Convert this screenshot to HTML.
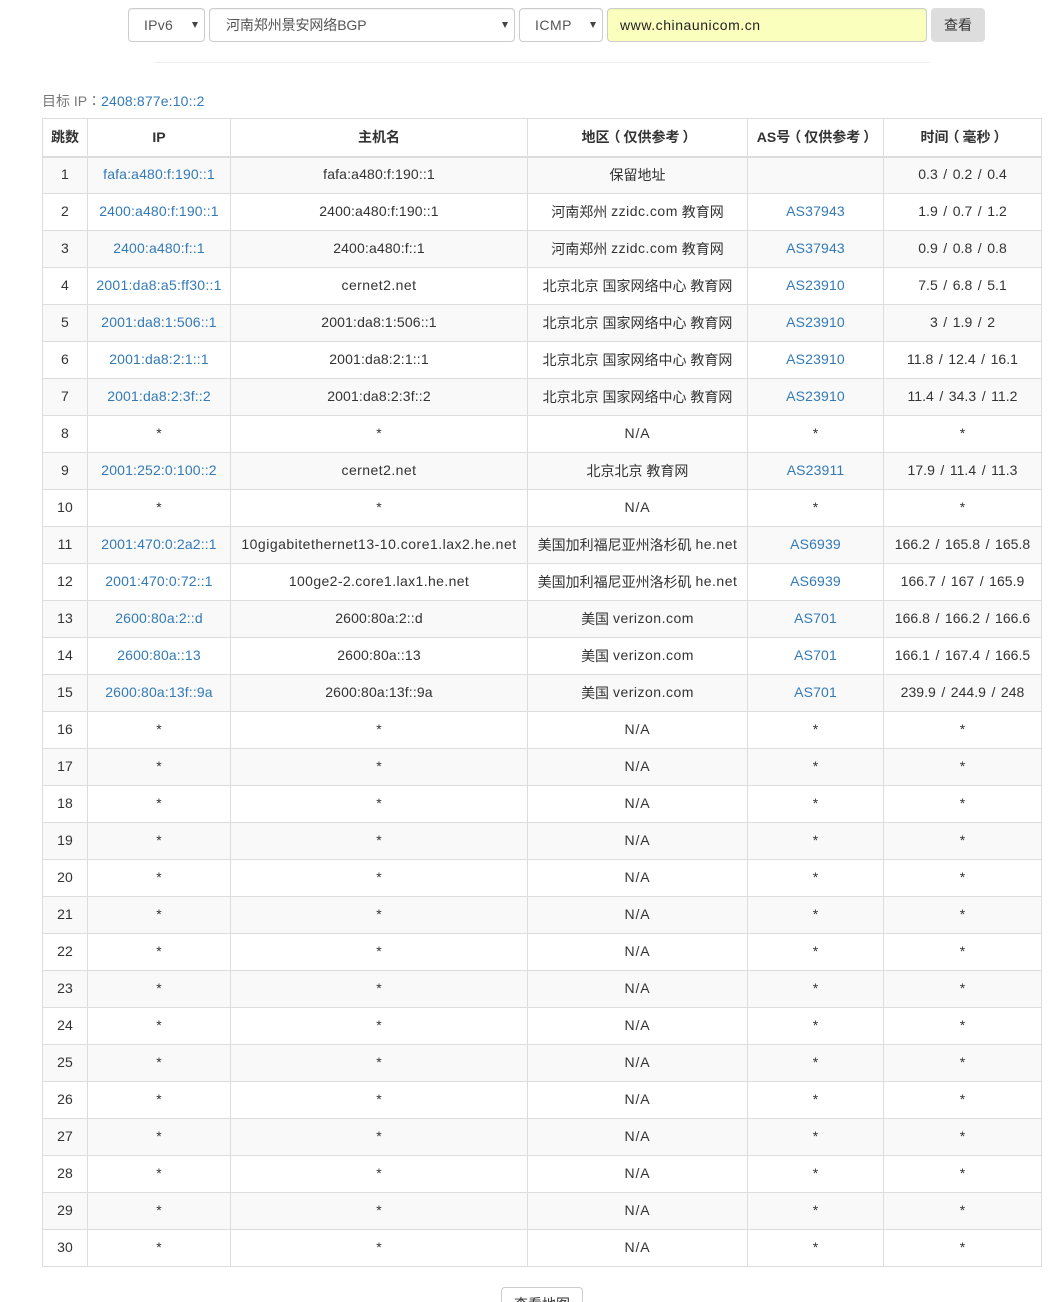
<!DOCTYPE html>
<html lang="zh-CN">
<head>
<meta charset="utf-8">
<title>路由追踪</title>
<style>
html,body{margin:0;padding:0;background:#fff;width:1061px;height:1302px;overflow:hidden;}
#w{position:relative;width:1061px;height:1302px;overflow:hidden;font-family:"Liberation Sans","Noto Sans CJK SC",sans-serif;font-size:14px;color:#333;}
a{color:#337ab7;text-decoration:none;}
.ctl{position:absolute;top:8px;height:34px;box-sizing:border-box;border:1px solid #ccc;border-radius:4px;background:#fff;color:#555;line-height:32px;box-shadow:inset 0 1px 1px rgba(0,0,0,.05);white-space:nowrap;}
.ctl i{position:absolute;top:13px;width:0;height:0;border-left:3px solid transparent;border-right:3px solid transparent;border-top:6px solid #444;}
.hr{position:absolute;left:154px;top:62px;width:776px;height:1px;background:#eee;}
.lbl{position:absolute;left:42px;top:91px;line-height:20px;color:#777;white-space:nowrap;}
.lbl a{letter-spacing:.15px;}
.tc{font-family:"Noto Sans CJK TC",sans-serif;}
.p{position:relative;left:-3px;}
.q{position:relative;left:3px;}
table{position:absolute;left:42px;top:118px;width:1000px;table-layout:fixed;border-collapse:collapse;border:1px solid #ddd;}
th,td{border:1px solid #ddd;text-align:center;padding:0;white-space:nowrap;box-sizing:border-box;vertical-align:middle;}
th{height:38px;border-bottom:2px solid #ddd;font-weight:bold;}
td{height:37px;padding-bottom:2px;letter-spacing:.15px;}
td.r{padding-bottom:0;letter-spacing:0;}
td.t{word-spacing:1.6px;letter-spacing:.03px;}
td.n{letter-spacing:.9px;}
td.h{letter-spacing:.45px;}
span.l{letter-spacing:.5px;position:relative;top:-1px;}
tbody tr:nth-child(odd){background:#f9f9f9;}
.more{position:absolute;left:501px;top:1287px;width:82px;height:34px;box-sizing:border-box;border:1px solid #ccc;border-radius:4px;background:#fff;text-align:center;line-height:32px;color:#333;}
</style>
</head>
<body>
<div id="w">
<div class="ctl" style="left:128px;width:77px;padding-left:15px;letter-spacing:.25px;">IPv6<i style="left:63px;"></i></div>
<div class="ctl" style="left:209px;width:306px;padding-left:16px;letter-spacing:-.1px;">河南郑州景安网络BGP<i style="left:292px;"></i></div>
<div class="ctl" style="left:519px;width:84px;padding-left:15px;letter-spacing:.5px;">ICMP<i style="left:70px;"></i></div>
<div class="ctl" style="left:607px;width:320px;padding-left:12px;background:#faffbd;color:#222;letter-spacing:.55px;">www.chinaunicom.cn</div>
<div style="position:absolute;left:931px;top:8px;width:54px;height:34px;background:#ddd;border-radius:4px;text-align:center;line-height:34px;color:#333;">查看</div>
<div class="hr"></div>
<div class="lbl">目标 IP<span class="tc" lang="zh-TW">：</span><a href="#">2408:877e:10::2</a></div>
<table>
<colgroup><col style="width:45px"><col style="width:143px"><col style="width:297px"><col style="width:220px"><col style="width:136px"><col style="width:158px"></colgroup>
<thead><tr><th>跳数</th><th>IP</th><th>主机名</th><th>地区<span class="p">（</span>仅供参考<span class="q">）</span></th><th>AS号<span class="p">（</span>仅供参考<span class="q">）</span></th><th>时间<span class="p">（</span>毫秒<span class="q">）</span></th></tr></thead>
<tbody>
<tr><td>1</td><td><a href="#">fafa:a480:f:190::1</a></td><td>fafa:a480:f:190::1</td><td class="r">保留地址</td><td></td><td class="t">0.3 / 0.2 / 0.4</td></tr>
<tr><td>2</td><td><a href="#">2400:a480:f:190::1</a></td><td>2400:a480:f:190::1</td><td class="r">河南郑州 <span class="l">zzidc.com</span> 教育网</td><td><a href="#">AS37943</a></td><td class="t">1.9 / 0.7 / 1.2</td></tr>
<tr><td>3</td><td><a href="#">2400:a480:f::1</a></td><td>2400:a480:f::1</td><td class="r">河南郑州 <span class="l">zzidc.com</span> 教育网</td><td><a href="#">AS37943</a></td><td class="t">0.9 / 0.8 / 0.8</td></tr>
<tr><td>4</td><td><a href="#" style="letter-spacing:.26px">2001:da8:a5:ff30::1</a></td><td class="h">cernet2.net</td><td class="r">北京北京 国家网络中心 教育网</td><td><a href="#">AS23910</a></td><td class="t">7.5 / 6.8 / 5.1</td></tr>
<tr><td>5</td><td><a href="#">2001:da8:1:506::1</a></td><td>2001:da8:1:506::1</td><td class="r">北京北京 国家网络中心 教育网</td><td><a href="#">AS23910</a></td><td class="t">3 / 1.9 / 2</td></tr>
<tr><td>6</td><td><a href="#">2001:da8:2:1::1</a></td><td>2001:da8:2:1::1</td><td class="r">北京北京 国家网络中心 教育网</td><td><a href="#">AS23910</a></td><td class="t">11.8 / 12.4 / 16.1</td></tr>
<tr><td>7</td><td><a href="#">2001:da8:2:3f::2</a></td><td>2001:da8:2:3f::2</td><td class="r">北京北京 国家网络中心 教育网</td><td><a href="#">AS23910</a></td><td class="t">11.4 / 34.3 / 11.2</td></tr>
<tr><td>8</td><td>*</td><td>*</td><td class="n">N/A</td><td>*</td><td>*</td></tr>
<tr><td>9</td><td><a href="#">2001:252:0:100::2</a></td><td class="h">cernet2.net</td><td class="r">北京北京 教育网</td><td><a href="#">AS23911</a></td><td class="t">17.9 / 11.4 / 11.3</td></tr>
<tr><td>10</td><td>*</td><td>*</td><td class="n">N/A</td><td>*</td><td>*</td></tr>
<tr><td>11</td><td><a href="#">2001:470:0:2a2::1</a></td><td class="h" style="letter-spacing:.5px">10gigabitethernet13-10.core1.lax2.he.net</td><td class="r">美国加利福尼亚州洛杉矶 <span class="l">he.net</span></td><td><a href="#">AS6939</a></td><td class="t">166.2 / 165.8 / 165.8</td></tr>
<tr><td>12</td><td><a href="#">2001:470:0:72::1</a></td><td class="h" style="letter-spacing:.38px">100ge2-2.core1.lax1.he.net</td><td class="r">美国加利福尼亚州洛杉矶 <span class="l">he.net</span></td><td><a href="#">AS6939</a></td><td class="t">166.7 / 167 / 165.9</td></tr>
<tr><td>13</td><td><a href="#">2600:80a:2::d</a></td><td>2600:80a:2::d</td><td class="r">美国 <span class="l">verizon.com</span></td><td><a href="#">AS701</a></td><td class="t">166.8 / 166.2 / 166.6</td></tr>
<tr><td>14</td><td><a href="#">2600:80a::13</a></td><td>2600:80a::13</td><td class="r">美国 <span class="l">verizon.com</span></td><td><a href="#">AS701</a></td><td class="t">166.1 / 167.4 / 166.5</td></tr>
<tr><td>15</td><td><a href="#">2600:80a:13f::9a</a></td><td>2600:80a:13f::9a</td><td class="r">美国 <span class="l">verizon.com</span></td><td><a href="#">AS701</a></td><td class="t">239.9 / 244.9 / 248</td></tr>
<tr><td>16</td><td>*</td><td>*</td><td class="n">N/A</td><td>*</td><td>*</td></tr>
<tr><td>17</td><td>*</td><td>*</td><td class="n">N/A</td><td>*</td><td>*</td></tr>
<tr><td>18</td><td>*</td><td>*</td><td class="n">N/A</td><td>*</td><td>*</td></tr>
<tr><td>19</td><td>*</td><td>*</td><td class="n">N/A</td><td>*</td><td>*</td></tr>
<tr><td>20</td><td>*</td><td>*</td><td class="n">N/A</td><td>*</td><td>*</td></tr>
<tr><td>21</td><td>*</td><td>*</td><td class="n">N/A</td><td>*</td><td>*</td></tr>
<tr><td>22</td><td>*</td><td>*</td><td class="n">N/A</td><td>*</td><td>*</td></tr>
<tr><td>23</td><td>*</td><td>*</td><td class="n">N/A</td><td>*</td><td>*</td></tr>
<tr><td>24</td><td>*</td><td>*</td><td class="n">N/A</td><td>*</td><td>*</td></tr>
<tr><td>25</td><td>*</td><td>*</td><td class="n">N/A</td><td>*</td><td>*</td></tr>
<tr><td>26</td><td>*</td><td>*</td><td class="n">N/A</td><td>*</td><td>*</td></tr>
<tr><td>27</td><td>*</td><td>*</td><td class="n">N/A</td><td>*</td><td>*</td></tr>
<tr><td>28</td><td>*</td><td>*</td><td class="n">N/A</td><td>*</td><td>*</td></tr>
<tr><td>29</td><td>*</td><td>*</td><td class="n">N/A</td><td>*</td><td>*</td></tr>
<tr><td>30</td><td>*</td><td>*</td><td class="n">N/A</td><td>*</td><td>*</td></tr>
</tbody>
</table>
<div class="more">查看地图</div>
</div>
</body>
</html>
